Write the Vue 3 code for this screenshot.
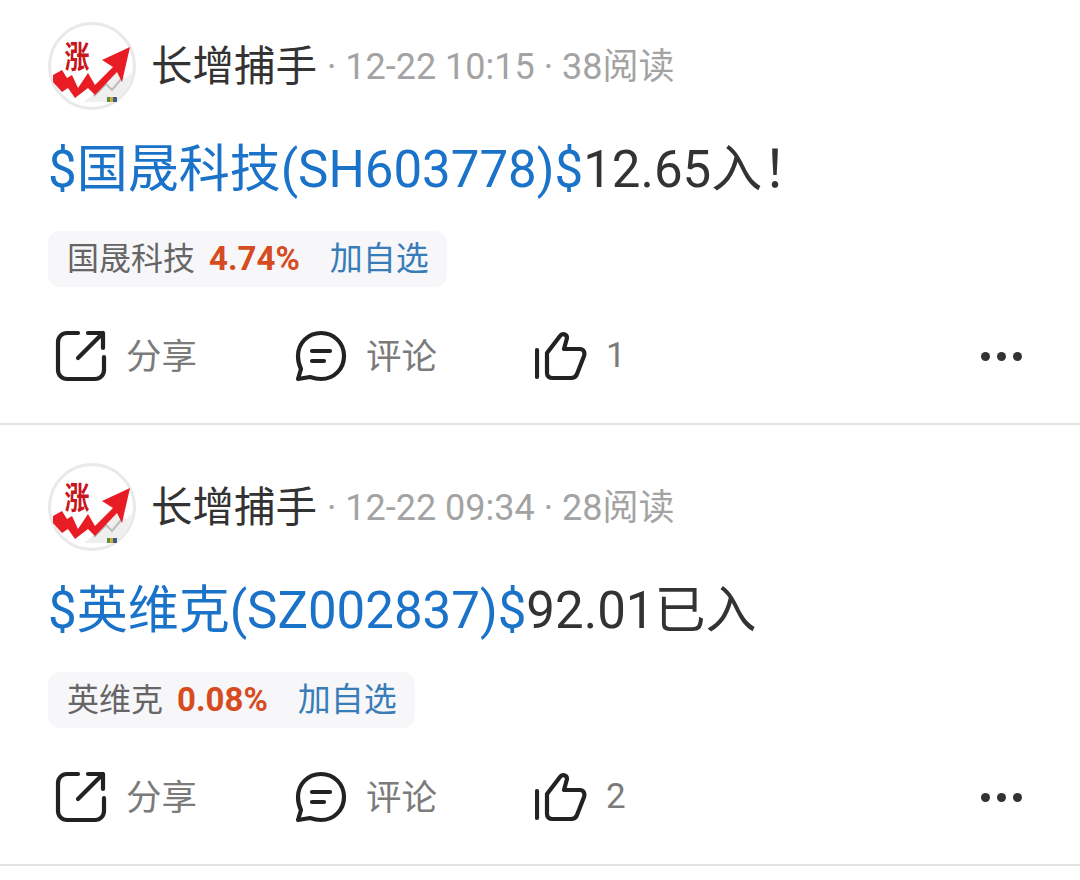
<script setup>
const posts = [
  { id: 1, time: '12-22 10:15', reads: '38阅读', stock: '国晟科技', code: 'SH603778', pct: '4.74%', text: '12.65入！', likes: 1 },
  { id: 2, time: '12-22 09:34', reads: '28阅读', stock: '英维克', code: 'SZ002837', pct: '0.08%', text: '92.01已入', likes: 2 },
]
</script>

<template>
  <div class="feed">
    <article v-for="p in posts" :key="p.id" class="post">
      <header class="head">
        <svg class="avatar" viewBox="0 0 88 88">
          <circle cx="44" cy="44" r="42.5" fill="#fff" stroke="#e9e9e9" stroke-width="3" />
          <path d="M36 80 L70 50 L78 56 L84 50 C82 64 74 74 64 80 Z" fill="#efefef" />
          <path d="M46 74 L58 62 L64 68 L74 56" fill="none" stroke="#bdbdbd" stroke-width="2" />
          <rect x="59" y="75" width="3" height="5" fill="#5a8f3c" />
          <rect x="62" y="75" width="3" height="5" fill="#d9a92a" />
          <rect x="65" y="75" width="4" height="5" fill="#3a5f8f" />
          <path d="M5 53 L14 48 L19 56 L24 53 L30 66 L40 51 L47 63 L65 45 L54 38 L82 25 L74 60 L69 50 L47 73 L40 66 L27 76 L20 66 L14 70 L5 60 Z" fill="#e81c24" />
          <text x="29" y="46" class="zhang" transform="translate(29 46) scale(1 1.25) translate(-29 -46)">涨</text>
        </svg>
        <span class="name">长增捕手</span>
        <span class="meta"> · {{ p.time }} · {{ p.reads }}</span>
      </header>

      <p class="title"><span class="link">${{ p.stock }}({{ p.code }})$</span>{{ p.text }}</p>

      <div class="chip">
        <span class="chip-name">{{ p.stock }}</span>
        <b class="chip-pct">{{ p.pct }}</b>
        <span class="chip-add">加自选</span>
      </div>

      <footer class="actions">
        <div class="act act-share">
          <svg class="ico" viewBox="0 0 52 52" fill="none" stroke="#222" stroke-width="4.2" stroke-linecap="round" stroke-linejoin="round">
            <path d="M23 3 H12 A9 9 0 0 0 3 12 V40 A9 9 0 0 0 12 49 H40 A9 9 0 0 0 49 40 V27" />
            <path d="M23 28 L48 3 M33 3 H48 V18" />
          </svg>
          <span>分享</span>
        </div>
        <div class="act act-comment">
          <svg class="ico" viewBox="0 0 52 52" fill="none" stroke="#222" stroke-width="4.2" stroke-linecap="round" stroke-linejoin="round">
            <path d="M26 3 C39 3 49 13 49 26 C49 39 39 49 26 49 C22 49 18 48 15 47 L3 49 L6 39 C4 35 3 31 3 26 C3 13 13 3 26 3 Z" />
            <path d="M17 21 H35 M17 31 H29" />
          </svg>
          <span>评论</span>
        </div>
        <div class="act act-like">
          <svg class="ico" viewBox="0 0 52 52" fill="none" stroke="#222" stroke-width="4.2" stroke-linecap="round" stroke-linejoin="round">
            <path d="M2 20 V47" />
            <path d="M12 23 L25 6 C27 3 32 4 32 8 L29 19 H45 C49 19 50 23 49 26 L42 44 C41 47 39 48 36 48 H18 C14 48 12 46 12 43 Z" />
          </svg>
          <span class="count">{{ p.likes }}</span>
        </div>
        <div class="dots"><i></i><i></i><i></i></div>
      </footer>
    </article>
  </div>
</template>

<style scoped>
.feed {
  width: 1080px;
  background: #fff;
  font-family: Roboto, "Noto Sans CJK SC", sans-serif;
}
.post {
  height: 425px;
  margin-bottom: 16px;
  box-sizing: border-box;
  padding: 22px 0 0 48px;
  border-bottom: 2px solid #e2e2e2;
}
.head {
  display: flex;
  align-items: center;
  height: 88px;
}
.avatar {
  width: 88px;
  height: 88px;
  flex: none;
}
.zhang {
  font-family: "Noto Sans CJK SC", sans-serif;
  font-size: 25px;
  font-weight: 700;
  fill: #c8161d;
  text-anchor: middle;
}
.name {
  margin: 0 0 6px 15px;
  font-size: 41.5px;
  color: #333;
}
.meta {
  margin: 0 0 6px 1px;
  font-size: 36px;
  color: #a3a3a3;
  white-space: pre;
}
.title {
  margin: 26px 0 0 0;
  height: 68px;
  font-size: 51px;
  line-height: 68px;
  color: #333;
}
.link {
  color: #1a73c8;
}
.chip {
  display: inline-flex;
  align-items: center;
  box-sizing: border-box;
  height: 56px;
  margin-top: 27px;
  padding: 0 18px 6px 19px;
  border-radius: 12px;
  background: #f7f7fa;
  font-size: 33px;
}
.chip-name {
  font-size: 32px;
  color: #666;
}
.chip-pct {
  margin: 4px 0 0 14px;
  font-size: 33px;
  font-weight: 700;
  color: #d64c20;
}
.chip-add {
  margin-left: 30px;
  color: #3a7cb8;
}
.actions {
  display: flex;
  align-items: center;
  height: 52px;
  margin-top: 43px;
  padding-left: 7px;
}
.act {
  display: flex;
  align-items: center;
  gap: 19px;
  font-size: 35.5px;
  color: #7b7b7b;
}
.act span {
  padding-bottom: 5px;
}
.act .count {
  font-size: 35px;
  padding-bottom: 2px;
}
.act-share,
.act-comment {
  width: 240px;
}
.act-like {
  width: 446px;
}
.ico {
  width: 52px;
  height: 52px;
  flex: none;
}
.dots {
  display: flex;
  gap: 7px;
}
.dots i {
  width: 9px;
  height: 9px;
  border-radius: 50%;
  background: #333;
}
</style>
